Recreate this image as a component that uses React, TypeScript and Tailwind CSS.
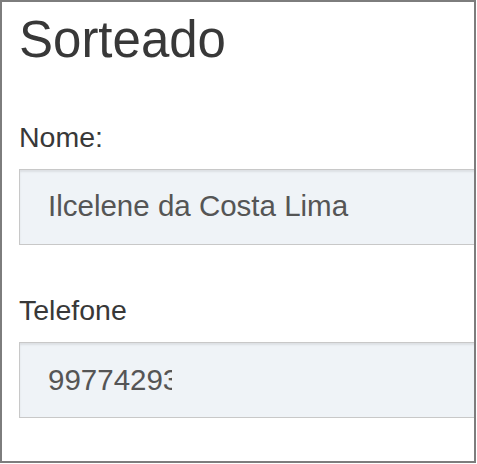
export default function App() {
  return (
    <div className="w-[476px] h-[463px] overflow-hidden border-2 border-[#7d7d7d] bg-white font-['Liberation_Sans',Arial,sans-serif]">
      <div className="pl-[17px]">
        <h2 className="mt-[12px] text-[51px] leading-none font-normal text-[#383838]">Sorteado</h2>

        <label className="mt-[58px] block text-[28.5px] leading-none text-[#383838]">Nome:</label>
        <div className="mt-[17px] flex h-[76px] w-[500px] items-center border border-[#c8c8c8] bg-[#eff3f7] pl-[28px] text-[29.5px] text-[#555] shadow-[inset_0_2px_2px_rgba(0,0,0,0.08)]">
          Ilcelene da Costa Lima
        </div>

        <label className="mt-[51px] block text-[28.5px] leading-none text-[#383838]">Telefone</label>
        <div className="mt-[18px] flex h-[76px] w-[500px] items-center border border-[#c8c8c8] bg-[#eff3f7] pl-[28px] text-[29.5px] text-[#555] shadow-[inset_0_2px_2px_rgba(0,0,0,0.08)]">
          <span className="block w-[124px] overflow-hidden whitespace-nowrap">99774293</span>
        </div>
      </div>
    </div>
  );
}
